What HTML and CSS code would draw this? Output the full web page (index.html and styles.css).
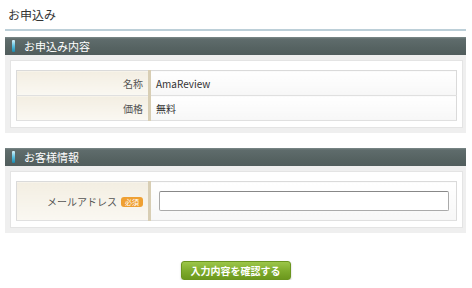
FILE: index.html
```html
<!DOCTYPE html>
<html lang="ja">
<head>
<meta charset="utf-8">
<title>お申込み</title>
<link rel="stylesheet" href="styles.css">
</head>
<body>
<div class="page">
  <h1 class="title">お申込み</h1>

  <div class="section-head"><span class="bullet"></span><span class="section-title">お申込み内容</span></div>
  <div class="panel">
    <div class="panel-inner">
      <table class="form-table">
        <tr><th>名称</th><td>AmaReview</td></tr>
        <tr><th>価格</th><td>無料</td></tr>
      </table>
    </div>
  </div>

  <div class="section-head second"><span class="bullet"></span><span class="section-title">お客様情報</span></div>
  <div class="panel">
    <div class="panel-inner">
      <table class="form-table tall">
        <tr><th>メールアドレス<span class="req">必須</span></th><td class="input-cell"><input class="text-input" type="text"></td></tr>
      </table>
    </div>
  </div>

  <div class="actions"><button class="confirm" type="button">入力内容を確認する</button></div>
</div>
</body>
</html>
```

FILE: styles.css
```css
html, body {
  margin: 0;
  padding: 0;
  background: #ffffff;
}
body {
  font-family: "Noto Sans CJK JP", "Noto Sans", sans-serif;
  color: #333;
}
.page {
  padding: 0 6px 0 5px;
}
.title {
  margin: 0 0 6px 0;
  padding: 7px 0 6px 3px;
  font-size: 12px;
  line-height: 16px;
  font-weight: normal;
  color: #333;
  border-bottom: 2px solid #bccfd8;
}
.section-head {
  display: flex;
  align-items: center;
  height: 18px;
  background: linear-gradient(#7d8a8a 0, #5f6c6c 2px, #566362 60%, #515d5d 100%);
  color: #fff;
}
.section-head.second {
  margin-top: 15px;
}
.bullet {
  width: 3px;
  height: 12px;
  margin-left: 7px;
  margin-right: 9px;
  border-radius: 1px;
  background: linear-gradient(#d6f2fb, #5cc0e0 50%, #1688ad);
}
.section-title {
  font-size: 11px;
  line-height: 18px;
}
.panel {
  background: #efefef;
  padding: 5px 3px 5px 5px;
}
.panel-inner {
  background: #fff;
  border: 1px solid #e4e4e4;
  padding: 9px 5px 6px 5px;
}
.form-table {
  width: 100%;
  border-collapse: collapse;
  border: 1px solid #dadada;
}
.form-table th,
.form-table td {
  height: 24px;
  padding: 0;
  font-size: 10px;
  border-bottom: 1px solid #e0e0e0;
}
.form-table th {
  width: 126px;
  text-align: right;
  padding-right: 5px;
  font-weight: normal;
  color: #555;
  background: linear-gradient(#f3eee2, #faf8f2);
  border-right: 3px solid #d8ceb4;
}
.form-table td {
  text-align: left;
  padding-left: 5px;
  color: #333;
  background: linear-gradient(#ffffff, #f7f7f7);
}
.form-table.tall th,
.form-table.tall td {
  height: 38px;
}
.form-table td.input-cell {
  padding-left: 8px;
}
.req {
  display: inline-block;
  margin-left: 4px;
  padding: 0 4px;
  height: 10px;
  line-height: 10px;
  font-size: 7px;
  color: #fff;
  background: #efa032;
  border-radius: 3px;
  vertical-align: 1px;
}
.text-input {
  display: block;
  box-sizing: border-box;
  width: 290px;
  height: 20px;
  margin: 0;
  border: 1px solid #aaa;
  border-top-color: #888;
  border-radius: 2px;
  background: #fff;
}
.actions {
  margin-top: 28px;
  display: flex;
  justify-content: center;
}
.confirm {
  width: 110px;
  height: 19px;
  padding: 0;
  border: 1px solid #6b951f;
  border-radius: 3px;
  background: linear-gradient(#9cc649, #7daa2b 55%, #6c981d);
  color: #fff;
  font-family: "Noto Sans CJK JP", sans-serif;
  font-size: 10px;
  font-weight: bold;
  line-height: 17px;
  box-shadow: 0 1px 2px rgba(0,0,0,0.25);
}
```
